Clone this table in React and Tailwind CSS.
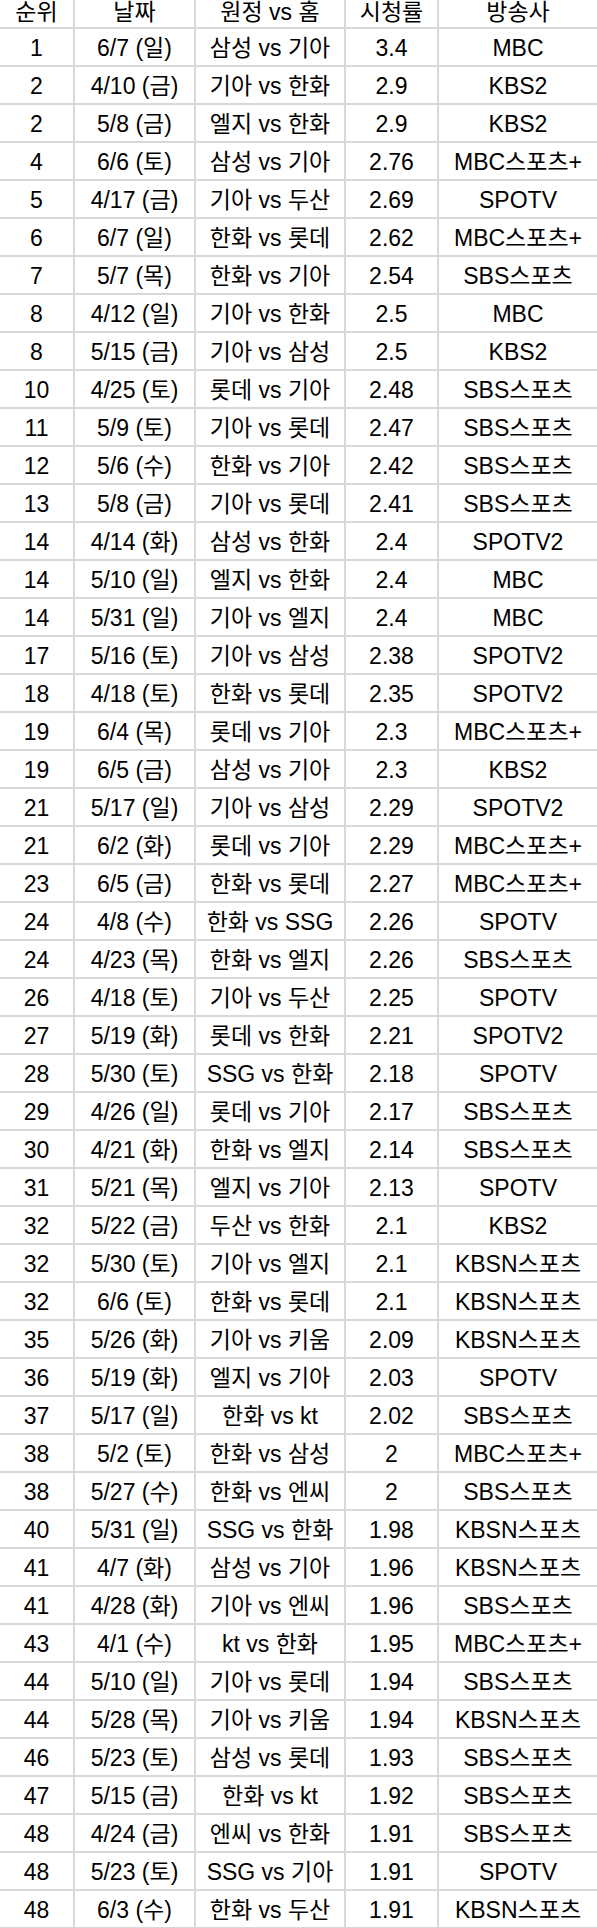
const rows = [
  ["1", "6/7 (일)", "삼성 vs 기아", "3.4", "MBC"],
  ["2", "4/10 (금)", "기아 vs 한화", "2.9", "KBS2"],
  ["2", "5/8 (금)", "엘지 vs 한화", "2.9", "KBS2"],
  ["4", "6/6 (토)", "삼성 vs 기아", "2.76", "MBC스포츠+"],
  ["5", "4/17 (금)", "기아 vs 두산", "2.69", "SPOTV"],
  ["6", "6/7 (일)", "한화 vs 롯데", "2.62", "MBC스포츠+"],
  ["7", "5/7 (목)", "한화 vs 기아", "2.54", "SBS스포츠"],
  ["8", "4/12 (일)", "기아 vs 한화", "2.5", "MBC"],
  ["8", "5/15 (금)", "기아 vs 삼성", "2.5", "KBS2"],
  ["10", "4/25 (토)", "롯데 vs 기아", "2.48", "SBS스포츠"],
  ["11", "5/9 (토)", "기아 vs 롯데", "2.47", "SBS스포츠"],
  ["12", "5/6 (수)", "한화 vs 기아", "2.42", "SBS스포츠"],
  ["13", "5/8 (금)", "기아 vs 롯데", "2.41", "SBS스포츠"],
  ["14", "4/14 (화)", "삼성 vs 한화", "2.4", "SPOTV2"],
  ["14", "5/10 (일)", "엘지 vs 한화", "2.4", "MBC"],
  ["14", "5/31 (일)", "기아 vs 엘지", "2.4", "MBC"],
  ["17", "5/16 (토)", "기아 vs 삼성", "2.38", "SPOTV2"],
  ["18", "4/18 (토)", "한화 vs 롯데", "2.35", "SPOTV2"],
  ["19", "6/4 (목)", "롯데 vs 기아", "2.3", "MBC스포츠+"],
  ["19", "6/5 (금)", "삼성 vs 기아", "2.3", "KBS2"],
  ["21", "5/17 (일)", "기아 vs 삼성", "2.29", "SPOTV2"],
  ["21", "6/2 (화)", "롯데 vs 기아", "2.29", "MBC스포츠+"],
  ["23", "6/5 (금)", "한화 vs 롯데", "2.27", "MBC스포츠+"],
  ["24", "4/8 (수)", "한화 vs SSG", "2.26", "SPOTV"],
  ["24", "4/23 (목)", "한화 vs 엘지", "2.26", "SBS스포츠"],
  ["26", "4/18 (토)", "기아 vs 두산", "2.25", "SPOTV"],
  ["27", "5/19 (화)", "롯데 vs 한화", "2.21", "SPOTV2"],
  ["28", "5/30 (토)", "SSG vs 한화", "2.18", "SPOTV"],
  ["29", "4/26 (일)", "롯데 vs 기아", "2.17", "SBS스포츠"],
  ["30", "4/21 (화)", "한화 vs 엘지", "2.14", "SBS스포츠"],
  ["31", "5/21 (목)", "엘지 vs 기아", "2.13", "SPOTV"],
  ["32", "5/22 (금)", "두산 vs 한화", "2.1", "KBS2"],
  ["32", "5/30 (토)", "기아 vs 엘지", "2.1", "KBSN스포츠"],
  ["32", "6/6 (토)", "한화 vs 롯데", "2.1", "KBSN스포츠"],
  ["35", "5/26 (화)", "기아 vs 키움", "2.09", "KBSN스포츠"],
  ["36", "5/19 (화)", "엘지 vs 기아", "2.03", "SPOTV"],
  ["37", "5/17 (일)", "한화 vs kt", "2.02", "SBS스포츠"],
  ["38", "5/2 (토)", "한화 vs 삼성", "2", "MBC스포츠+"],
  ["38", "5/27 (수)", "한화 vs 엔씨", "2", "SBS스포츠"],
  ["40", "5/31 (일)", "SSG vs 한화", "1.98", "KBSN스포츠"],
  ["41", "4/7 (화)", "삼성 vs 기아", "1.96", "KBSN스포츠"],
  ["41", "4/28 (화)", "기아 vs 엔씨", "1.96", "SBS스포츠"],
  ["43", "4/1 (수)", "kt vs 한화", "1.95", "MBC스포츠+"],
  ["44", "5/10 (일)", "기아 vs 롯데", "1.94", "SBS스포츠"],
  ["44", "5/28 (목)", "기아 vs 키움", "1.94", "KBSN스포츠"],
  ["46", "5/23 (토)", "삼성 vs 롯데", "1.93", "SBS스포츠"],
  ["47", "5/15 (금)", "한화 vs kt", "1.92", "SBS스포츠"],
  ["48", "4/24 (금)", "엔씨 vs 한화", "1.91", "SBS스포츠"],
  ["48", "5/23 (토)", "SSG vs 기아", "1.91", "SPOTV"],
  ["48", "6/3 (수)", "한화 vs 두산", "1.91", "KBSN스포츠"],
];

const headers = ["순위", "날짜", "원정 vs 홈", "시청률", "방송사"];
const cols = "grid grid-cols-[75px_121px_150px_93px_158px]";

export default function App() {
  return (
    <div
      className="w-[597px] bg-white text-black text-[23px] leading-none"
      style={{ fontFamily: '"Liberation Sans", "Noto Sans CJK KR", sans-serif' }}
    >
      {/* Header */}
      <div className={`${cols} h-[29px] border-b-2 border-[#d8d8d8]`}>
        {headers.map((h, i) => (
          <div
            key={h}
            className={`flex items-start justify-center pt-[1px] ${i < 4 ? "border-r-2 border-[#d8d8d8]" : ""}`}
          >
            {h}
          </div>
        ))}
      </div>

      {/* Rows */}
      {rows.map((r, ri) => (
        <div key={ri} className={`${cols} h-[38px] border-b-2 border-[#d8d8d8]`}>
          {r.map((c, i) => (
            <div
              key={i}
              className={`flex items-center justify-center pt-[3px] whitespace-nowrap ${i < 4 ? "border-r-2 border-[#d8d8d8]" : ""}`}
            >
              {c}
            </div>
          ))}
        </div>
      ))}
    </div>
  );
}
